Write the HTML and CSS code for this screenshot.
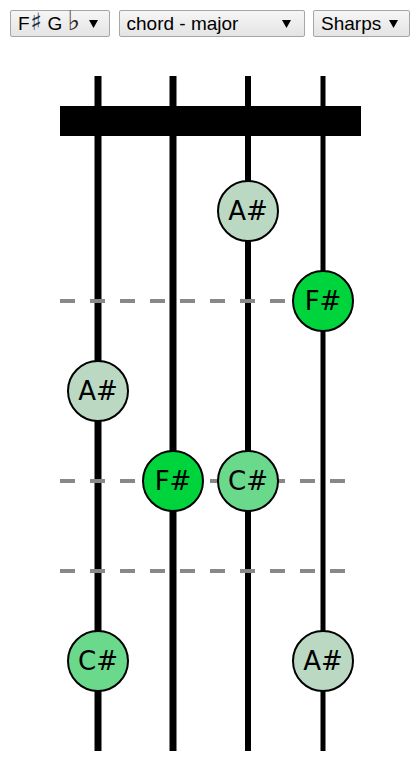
FILE: index.html
```html
<!DOCTYPE html>
<html>
<head>
	<meta charset="utf-8">
	<title>Fretboard</title>
	<link rel="stylesheet" href="styles.css">
</head>
<body>
	<div class="toolbar">
		<div class="picker picker-key">
			<span class="picker-label">F<span class="acc acc-sharp">&#9839;</span> G <span class="acc acc-flat">&#9837;</span></span>
			<svg class="picker-arrow" width="9" height="8" viewBox="0 0 9 8"><polygon points="0,0 9,0 4.5,8"/></svg>
		</div>
		<div class="picker picker-mode">
			<span class="picker-label">chord - major</span>
			<svg class="picker-arrow" width="9" height="8" viewBox="0 0 9 8"><polygon points="0,0 9,0 4.5,8"/></svg>
		</div>
		<div class="picker picker-acc">
			<span class="picker-label">Sharps</span>
			<svg class="picker-arrow" width="9" height="8" viewBox="0 0 9 8"><polygon points="0,0 9,0 4.5,8"/></svg>
		</div>
	</div>
	<svg class="fretboard" width="420" height="723" viewBox="0 47 420 723">
		<!-- strings -->
		<line class="string" x1="98" y1="76" x2="98" y2="751" stroke-width="7"/>
		<line class="string" x1="173" y1="76" x2="173" y2="751" stroke-width="7"/>
		<line class="string" x1="248" y1="76" x2="248" y2="751" stroke-width="6"/>
		<line class="string" x1="323" y1="76" x2="323" y2="751" stroke-width="5"/>
		<!-- nut -->
		<rect class="nut" x="60" y="106" width="301" height="30"/>
		<!-- fret markers -->
		<line class="fret" x1="60" y1="301" x2="345" y2="301"/>
		<line class="fret" x1="60" y1="481" x2="345" y2="481"/>
		<line class="fret" x1="60" y1="571" x2="345" y2="571"/>
		<!-- notes -->
		<g class="note third"><circle cx="248" cy="211" r="30"/><text x="248" y="220">A#</text></g>
		<g class="note root"><circle cx="323" cy="301" r="30"/><text x="323" y="310">F#</text></g>
		<g class="note third"><circle cx="98" cy="391" r="30"/><text x="98" y="400">A#</text></g>
		<g class="note root"><circle cx="173" cy="481" r="30"/><text x="173" y="490">F#</text></g>
		<g class="note fifth"><circle cx="248" cy="481" r="30"/><text x="248" y="490">C#</text></g>
		<g class="note fifth"><circle cx="98" cy="661" r="30"/><text x="98" y="670">C#</text></g>
		<g class="note third"><circle cx="323" cy="661" r="30"/><text x="323" y="670">A#</text></g>
	</svg>
</body>
</html>
```

FILE: styles.css
```css
* {
	margin: 0;
	padding: 0;
	box-sizing: border-box;
}
body {
	font-family: 'Liberation Sans', Arial, sans-serif;
	background-color: #fff;
}
.toolbar {
	display: flex;
	gap: 8.5px;
	padding: 10px 10px 10px;
	height: 47px;
}
.picker {
	display: flex;
	align-items: center;
	justify-content: space-between;
	height: 27px;
	padding: 0 11px 0 7px;
	border: 1px solid #a6a6a6;
	border-radius: 2px;
	background: linear-gradient(#f6f6f6, #e4e4e4);
	color: #000;
	font-size: 19px;
	white-space: nowrap;
}
.picker-key {
	width: 100px;
}
.picker-mode {
	width: 186px;
	padding-right: 13px;
}
.picker-acc {
	width: 97px;
}
.acc {
	font-family: 'DejaVu Sans', sans-serif;
	line-height: 0;
}
.acc-sharp {
	font-size: 24px;
	margin-left: 1px;
	color: #1a2a44;
}
.acc-flat {
	font-size: 27px;
	color: #2a1e14;
}
.picker-arrow {
	fill: #000;
}
.fretboard {
	display: block;
}
.string {
	stroke: #000;
}
.nut {
	fill: #000;
}
.fret {
	stroke: #888;
	stroke-width: 4;
	stroke-dasharray: 15 15;
}
.note circle {
	stroke: #000;
	stroke-width: 2;
}
.note text {
	font-family: 'DejaVu Sans', sans-serif;
	font-size: 26px;
	text-anchor: middle;
	fill: #000;
}
.root circle {
	fill: #00d43c;
}
.third circle {
	fill: #bad8c2;
}
.fifth circle {
	fill: #6bd98c;
}
```
